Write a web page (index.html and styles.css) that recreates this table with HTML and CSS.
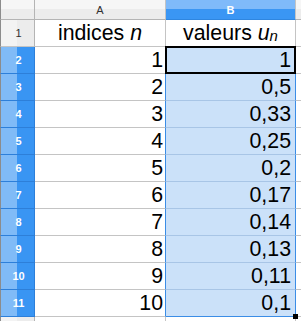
FILE: index.html
```html
<!DOCTYPE html>
<html lang="fr">
<head>
<meta charset="utf-8">
<title>Suite u(n)</title>
<link rel="stylesheet" href="styles.css">
</head>
<body>
<div class="sheet">
  <div class="corner"></div>
  <div class="colhead">A</div>
  <div class="colhead sel">B</div>
  <div class="colhead"></div>

  <div class="rowhead">1</div>
  <div class="cell title">indices <i>n</i></div>
  <div class="cell title">valeurs <i>u</i><span class="sub">n</span></div>
  <div class="cell"></div>

  <div class="rowhead sel">2</div>
  <div class="cell num edge">1</div>
  <div class="cell num picked active">1</div>
  <div class="cell"></div>

  <div class="rowhead sel">3</div>
  <div class="cell num edge">2</div>
  <div class="cell num picked">0,5</div>
  <div class="cell"></div>

  <div class="rowhead sel">4</div>
  <div class="cell num edge">3</div>
  <div class="cell num picked">0,33</div>
  <div class="cell"></div>

  <div class="rowhead sel">5</div>
  <div class="cell num edge">4</div>
  <div class="cell num picked">0,25</div>
  <div class="cell"></div>

  <div class="rowhead sel">6</div>
  <div class="cell num edge">5</div>
  <div class="cell num picked">0,2</div>
  <div class="cell"></div>

  <div class="rowhead sel">7</div>
  <div class="cell num edge">6</div>
  <div class="cell num picked">0,17</div>
  <div class="cell"></div>

  <div class="rowhead sel">8</div>
  <div class="cell num edge">7</div>
  <div class="cell num picked">0,14</div>
  <div class="cell"></div>

  <div class="rowhead sel">9</div>
  <div class="cell num edge">8</div>
  <div class="cell num picked">0,13</div>
  <div class="cell"></div>

  <div class="rowhead sel">10</div>
  <div class="cell num edge">9</div>
  <div class="cell num picked">0,11</div>
  <div class="cell"></div>

  <div class="rowhead sel">11</div>
  <div class="cell num edge">10</div>
  <div class="cell num picked last"><span>0,1</span><span class="handle"></span></div>
  <div class="cell"></div>

  <div class="rowhead"></div>
  <div class="cell"></div>
  <div class="cell"></div>
  <div class="cell"></div>
</div>
</body>
</html>
```
FILE: styles.css
```css
html, body {
  margin: 0;
  padding: 0;
  overflow: hidden;
  background: #ffffff;
}

.sheet {
  width: 301px;
  height: 321px;
  overflow: hidden;
  display: grid;
  grid-template-columns: 35px 131px 130px 80px;
  grid-template-rows: 20px repeat(12, 27px);
  font-family: "Liberation Sans", Arial, sans-serif;
  color: #000;
}

.sheet > div {
  box-sizing: border-box;
  border-right: 1px solid #c4c4c4;
  border-bottom: 1px solid #c4c4c4;
  white-space: nowrap;
  overflow: visible;
}

/* column letters */
.corner,
.colhead {
  background: linear-gradient(to bottom, #f6f6f6 50%, #ececec 50%);
  border-bottom-color: #b4b4b4 !important;
}

.corner {
  border-left: 1px solid #8c8c8c;
  border-right-color: #b4b4b4 !important;
}

.colhead {
  font-size: 11px;
  line-height: 17px;
  padding-top: 2px;
  text-align: center;
  color: #303030;
}

.colhead.sel {
  background: linear-gradient(to bottom, #7fbafa 50%, #3a96f4 50%);
  color: #ffffff;
  font-weight: bold;
  border-bottom-color: #2f86e0 !important;
}

/* row numbers */
.rowhead {
  border-left: 1px solid #8c8c8c;
  border-right-color: #b4b4b4 !important;
  background: linear-gradient(to right, #f3f3f3 50%, #ececec 50%);
  font-size: 11px;
  line-height: 26px;
  text-align: center;
  padding-left: 2px;
  color: #303030;
}

.rowhead.sel {
  background: linear-gradient(to right, #80bbf7 50%, #3995f3 50%);
  color: #ffffff;
  font-weight: bold;
  border-bottom-color: #2d7fd9 !important;
  border-right-color: #2d7fd9 !important;
}

/* cells */
.cell {
  font-size: 21.33px;
  line-height: 26px;
  background: #ffffff;
}

.title {
  text-align: center;
}

.sub {
  font-style: italic;
  font-size: 15px;
  vertical-align: -1px;
}

.num {
  text-align: right;
  padding-right: 2px;
}

.edge {
  border-right-color: #3b8de6 !important;
}

.picked {
  background: #cbe1f9;
  padding-right: 4px;
  border-right-color: #3b8de6 !important;
  border-bottom-color: #a8c5e6 !important;
}

.picked.last {
  border-bottom-color: #3b8de6 !important;
  position: relative;
}

/* active cell frame */
.active {
  position: relative;
}

.active::after {
  content: "";
  position: absolute;
  top: -1px;
  left: -1px;
  right: -1px;
  bottom: -1px;
  border: 2px solid #000000;
}

/* fill handle */
.handle {
  position: absolute;
  left: 127px;
  top: 24px;
  width: 5px;
  height: 5px;
  background: #000000;
  z-index: 2;
}
```
